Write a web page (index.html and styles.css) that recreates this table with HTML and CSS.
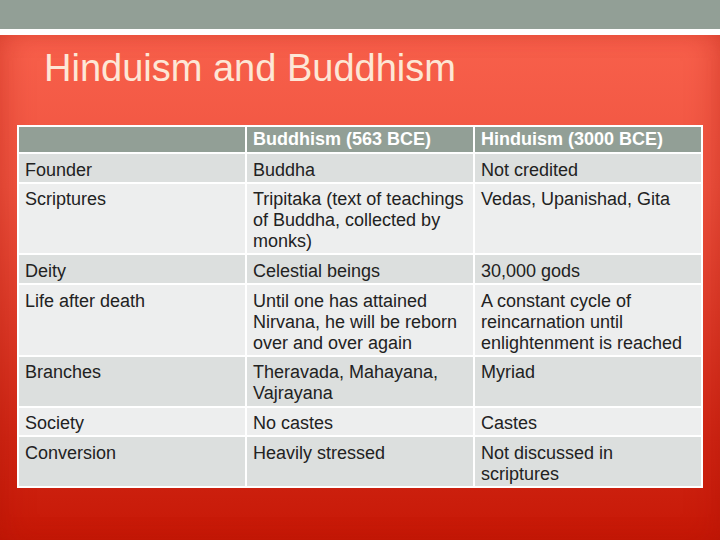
FILE: index.html
```html
<!DOCTYPE html>
<html>
<head>
<meta charset="utf-8">
<link rel="stylesheet" href="styles.css">
</head>
<body>
<div class="topbar"></div>
<div class="sep"></div>
<div class="slide">
  <h1 class="title">Hinduism and Buddhism</h1>
  <table class="cmp">
    <thead>
      <tr><th></th><th>Buddhism (563 BCE)</th><th>Hinduism (3000 BCE)</th></tr>
    </thead>
    <tbody>
      <tr class="dark"><td>Founder</td><td>Buddha</td><td>Not credited</td></tr>
      <tr class="light"><td>Scriptures</td><td>Tripitaka (text of teachings of Buddha, collected by monks)</td><td>Vedas, Upanishad, Gita</td></tr>
      <tr class="dark"><td>Deity</td><td>Celestial beings</td><td>30,000 gods</td></tr>
      <tr class="light"><td>Life after death</td><td>Until one has attained Nirvana, he will be reborn over and over again</td><td>A constant cycle of reincarnation until enlightenment is reached</td></tr>
      <tr class="dark"><td>Branches</td><td>Theravada, Mahayana, Vajrayana</td><td>Myriad</td></tr>
      <tr class="light"><td>Society</td><td>No castes</td><td>Castes</td></tr>
      <tr class="dark"><td>Conversion</td><td>Heavily stressed</td><td>Not discussed in scriptures</td></tr>
    </tbody>
  </table>
</div>
</body>
</html>
```

FILE: styles.css
```css
html, body {
  margin: 0;
  padding: 0;
  width: 720px;
  height: 540px;
  overflow: hidden;
  font-family: "Liberation Sans", Arial, sans-serif;
}
.topbar {
  height: 29px;
  background: #929f96;
}
.sep {
  height: 6px;
  background: #ffffff;
}
.slide {
  height: 505px;
  box-sizing: border-box;
  padding: 11px 0 0 0;
  background: linear-gradient(to bottom, #f8604b 0%, #ef5440 30%, #e03e2b 55%, #d02614 80%, #c71806 100%);
  box-shadow: inset 14px 0 30px -10px rgba(170, 20, 10, 0.35), inset -14px 0 30px -10px rgba(170, 20, 10, 0.35);
}
.title {
  margin: 0 0 0 44px;
  font-size: 38px;
  font-weight: normal;
  color: #fde7d6;
  line-height: 44px;
}
.cmp {
  margin: 35px 0 0 17px;
  width: 686px;
  table-layout: fixed;
  border-collapse: separate;
  border-spacing: 2px;
  background: #ffffff;
  font-size: 18px;
  line-height: 21.1px;
  color: #222222;
}
.cmp th {
  background: #929f96;
  color: #ffffff;
  font-weight: bold;
  text-align: left;
  padding: 2px 6px 2px 6px;
  vertical-align: top;
}
.cmp td {
  padding: 5.5px 6px 1px 6px;
  vertical-align: top;
}
.dark td {
  background: #dcdfde;
}
.light td {
  background: #edeeee;
}
```
